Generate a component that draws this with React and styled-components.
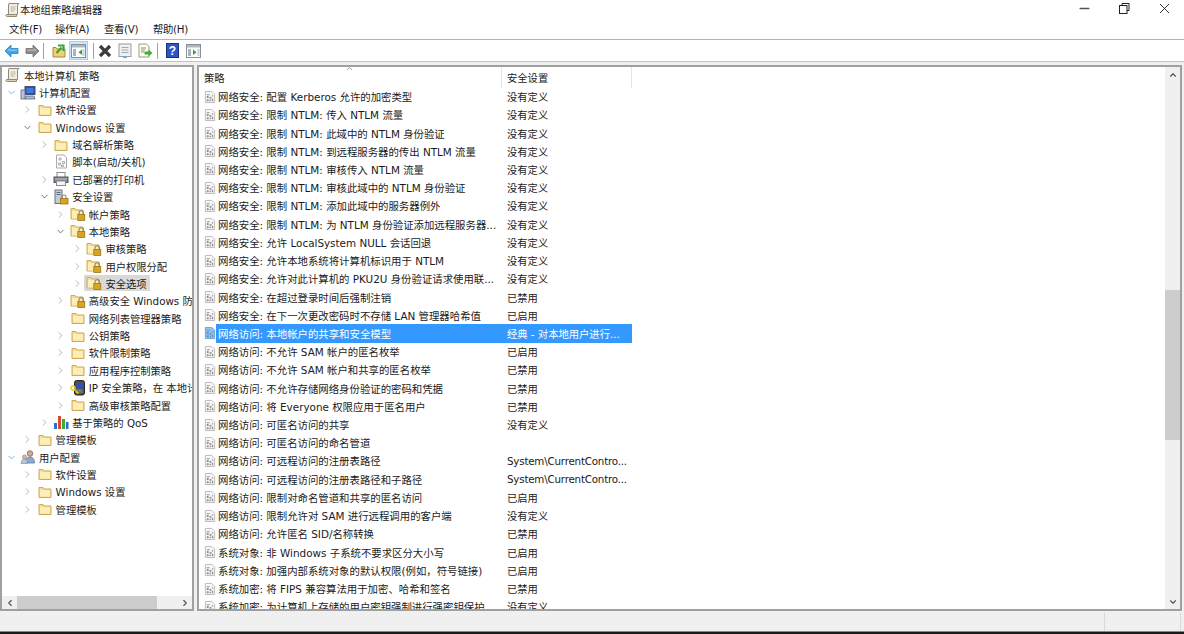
import React from 'react';
import styled, { createGlobalStyle } from 'styled-components';
import { ChevronRight, ChevronDown, ChevronUp, ChevronLeft, Minus, X } from 'lucide-react';

const GlobalStyle = createGlobalStyle`
  html, body { margin: 0; padding: 0; background: #fff; overflow: hidden; }
  body { font-family: "DejaVu Sans", "Noto Sans CJK SC", sans-serif; color: #1a1a1a; }
`;

const Window = styled.div`
  width: 1184px;
  height: 634px;
  display: flex;
  flex-direction: column;
  font-size: 10.3px;
  background: #f0f0f0;
`;

const TitleBar = styled.div`
  height: 19px;
  flex: none;
  display: flex;
  align-items: center;
  background: #fff;
  padding-left: 5px;
`;

const TitleText = styled.span`
  flex: 1;
  margin-left: -1px;
  margin-top: -1px;
`;

const WinButton = styled.div`
  width: 40px;
  display: flex;
  align-items: center;
  justify-content: center;
  margin-top: -2px;
`;

const MenuBar = styled.div`
  height: 21px;
  flex: none;
  display: flex;
  align-items: center;
  background: #fff;
  border-bottom: 1px solid #b4b4b4;
  padding: 0 0 1px 9px;
  gap: 14px;
  box-sizing: border-box;
`;

const MenuItem = styled.span`
  width: ${p => p.$w}px;
  white-space: nowrap;
  letter-spacing: -0.3px;
`;

const Toolbar = styled.div`
  height: 22px;
  flex: none;
  display: flex;
  align-items: center;
  background: #fff;
  border-bottom: 1px solid #c4c4c4;
  padding-left: 3px;
  box-sizing: border-box;
`;

const ToolIcon = styled.div`
  width: ${p => p.$w || 16}px;
  height: ${p => p.$h || 16}px;
  display: flex;
  align-items: center;
  justify-content: center;
  margin-right: ${p => p.$mr || 4}px;
  ${p => p.$active && 'background: #cce8ff; box-shadow: inset 0 0 0 1px #99d1ff;'}
`;

const ToolSep = styled.div`
  width: 1px;
  height: 16px;
  background: #a0a0a0;
  margin: 0 ${p => p.$r}px 0 ${p => p.$l}px;
`;

const Panes = styled.div`
  flex: 1;
  min-height: 0;
  display: flex;
  padding-top: 3px;
  gap: 3px;
`;

const LeftPane = styled.div`
  width: 190px;
  flex: none;
  border: 2px solid #a0a0a0;
  background: #fff;
  display: flex;
  flex-direction: column;
  overflow: hidden;
`;

const TreeArea = styled.div`
  flex: 1;
  min-height: 0;
  margin-top: -0.5px;
  overflow: hidden;
`;

const TreeRow = styled.div`
  height: 17.36px;
  display: flex;
  align-items: center;
  white-space: nowrap;
  padding-left: ${p => (p.$depth < 0 ? 3 : p.$depth * 16.6 + 1)}px;
`;

const Caret = styled.div`
  width: 17px;
  flex: none;
  display: flex;
  padding-left: 2.5px;
  box-sizing: border-box;
  color: #9a9a9a;
`;

const TreeItem = styled.div`
  display: flex;
  align-items: center;
  height: 16px;
  ${p => p.$sel && 'background: #d9d9d9; margin-left: -2px; padding: 0 3px 0 2px;'}
`;

const TreeIcon = styled.div`
  width: 16px;
  height: 16px;
  flex: none;
  display: flex;
  align-items: center;
  justify-content: center;
  margin-right: 3px;
`;

const HScroll = styled.div`
  height: 13px;
  flex: none;
  display: flex;
  align-items: center;
  background: #f0f0f0;
  color: #505050;
`;

const HThumb = styled.div`
  width: 140px;
  height: 100%;
  background: #cdcdcd;
  margin-right: auto;
`;

const ScrollBtn = styled.div`
  width: 15px;
  height: 100%;
  flex: none;
  display: flex;
  align-items: center;
  justify-content: center;
`;

const RightPane = styled.div`
  flex: 1;
  min-width: 0;
  margin-right: 2px;
  border: 2px solid #a0a0a0;
  background: #fff;
  display: flex;
  overflow: hidden;
`;

const ListArea = styled.div`
  flex: 1;
  min-width: 0;
  overflow: hidden;
`;

const HeaderRow = styled.div`
  height: 20.5px;
  display: flex;
  align-items: center;
`;

const HeaderCell = styled.div`
  width: ${p => p.$w}px;
  height: 100%;
  flex: none;
  display: flex;
  align-items: center;
  padding-left: ${p => p.$pl}px;
  box-sizing: border-box;
  border-right: 1px solid #e5e5e5;
  position: relative;
`;

const SortArrow = styled.div`
  position: absolute;
  left: 146px;
  top: -4px;
  color: #808080;
`;

const Row = styled.div`
  height: 18.23px;
  width: 433px;
  display: flex;
  align-items: center;
  white-space: nowrap;
`;

const RowIcon = styled.div`
  width: 12px;
  height: 14px;
  flex: none;
  margin-left: 5px;
  display: flex;
  align-items: center;
`;

const RowBody = styled.div`
  flex: 1;
  height: 100%;
  display: flex;
  align-items: center;
  ${p => p.$sel && 'background: #3399ff; color: #fff;'}
`;

const PolicyCell = styled.div`
  width: 291px;
  flex: none;
  padding-left: 2px;
  box-sizing: border-box;
  overflow: hidden;
  font-size: 10.4px;
`;

const ValueCell = styled.div`
  letter-spacing: ${p => (p.$latin ? '-0.2px' : '0')};
`;

const VScroll = styled.div`
  width: 15px;
  flex: none;
  display: flex;
  flex-direction: column;
  background: #f0f0f0;
  color: #505050;
`;

const VThumb = styled.div`
  height: 150px;
  margin-top: 208px;
  background: #cdcdcd;
  margin-bottom: auto;
`;

const VBtn = styled.div`
  height: 15px;
  flex: none;
  display: flex;
  align-items: center;
  justify-content: center;
`;

const StatusBar = styled.div`
  height: 20px;
  flex: none;
  display: flex;
  justify-content: flex-end;
`;

const StatusCell = styled.div`
  width: ${p => p.$w}px;
  flex: none;
  border-left: 1px solid #d9d9d9;
  margin-top: 2px;
`;

const BottomEdge = styled.div`
  height: 3px;
  flex: none;
  background: #1a1a1a;
  border-top: 1px solid #888;
  box-sizing: border-box;
`;

const Folder = () => (
  <svg width="14" height="14" viewBox="0 0 14 14">
    <path d="M1 2.5h4l1 1.5h7v8.5H1z" fill="#f8dc8f" stroke="#cda95a" strokeWidth="1" />
    <path d="M2 5h10v6.5H2z" fill="#fdeeb8" />
  </svg>
);

const LockFolder = () => (
  <svg width="16" height="16" viewBox="0 0 16 16">
    <path d="M1 2.5h4l1 1.5h7v9H1z" fill="#f8dc8f" stroke="#cda95a" strokeWidth="1" />
    <path d="M2 5h10v7.5H2z" fill="#fdeeb8" />
    <path d="M9 8.5V7a2.2 2.2 0 0 1 4.4 0v1.5" fill="none" stroke="#8a8a6a" strokeWidth="1.1" />
    <rect x="7.8" y="8.5" width="7" height="6" fill="#d9a520" stroke="#8f6c10" strokeWidth="0.7" />
  </svg>
);

const Scroll = () => (
  <svg width="16" height="16" viewBox="0 0 16 16">
    <path d="M4 1.5h10l-1.5 1.5v9.5H3.5V3z" fill="#f3efe0" stroke="#8d8a78" />
    <path d="M1.5 12.5h10v2h-9a1 1 0 0 1-1-2z" fill="#d9d2b5" stroke="#8d8a78" />
    <path d="M5.5 5h5M5.5 7h5M5.5 9h4" stroke="#a9a690" strokeWidth="0.8" />
  </svg>
);

const Computer = () => (
  <svg width="16" height="16" viewBox="0 0 16 16">
    <rect x="5" y="1.5" width="10" height="8" fill="#2a4fc0" stroke="#44506e" />
    <rect x="6.5" y="3" width="7" height="5" fill="#3f79e6" />
    <rect x="1" y="5" width="4" height="9" fill="#b8c2d2" stroke="#5c6a85" strokeWidth="0.8" />
    <path d="M6 11h8l1 3H5z" fill="#aeb9cc" stroke="#5c6a85" strokeWidth="0.8" />
  </svg>
);

const Users = () => (
  <svg width="16" height="16" viewBox="0 0 16 16">
    <circle cx="10" cy="4.5" r="2.8" fill="#d8a98c" stroke="#6a5a50" strokeWidth="0.7" />
    <path d="M5.5 14c0-4 2-6 4.5-6s4.5 2 4.5 6z" fill="#8fa9cf" stroke="#55688a" strokeWidth="0.7" />
    <circle cx="4.5" cy="8" r="2" fill="#d8b9a4" stroke="#7a7a7a" strokeWidth="0.6" />
    <path d="M1 14.5c0-2.8 1.4-4.5 3.5-4.5s3 1.4 3 4.5z" fill="#b5c5dc" stroke="#7a8aa0" strokeWidth="0.6" />
  </svg>
);

// grey page with the dotted pattern used by every policy row
const Doc = ({ sel }) => (
  <svg width="13" height="14" viewBox="0 0 13 14">
    <path d="M1.5 1h7l3 3v9h-10z" fill={sel ? '#8fc0ee' : '#f7f7f7'} stroke={sel ? '#6f9fce' : '#b9b9b9'} />
    <path d="M3 4h3v1H3zM3 6h2v2H3zM6 7h2v2H6zM8.5 5h1.5v1.5H8.5zM3 9.5h2v2H3zM6 10h1.5v1.5H6zM8.5 9h1.5v2.5H8.5z" fill={sel ? '#5f92c4' : '#8f8f8f'} />
  </svg>
);

const ScriptDoc = () => (
  <svg width="15" height="15" viewBox="0 0 15 15">
    <path d="M2.5 1h7.5l2.5 2.5V14h-10z" fill="#fff" stroke="#a9a9a9" />
    <path d="M5 4h2v2H5zM8.5 7.5h2v2h-2zM4.5 9h2v2h-2zM7.5 11h2v1.5h-2z" fill="none" stroke="#9a9a9a" strokeWidth="0.8" />
  </svg>
);

const Printer = () => (
  <svg width="16" height="16" viewBox="0 0 16 16">
    <rect x="4" y="1.5" width="8" height="5" fill="#fff" stroke="#8b8b8b" />
    <rect x="1" y="6" width="14" height="5.5" fill="#7e8288" stroke="#54575c" />
    <rect x="3.5" y="10" width="9" height="4.5" fill="#f4f4f4" stroke="#8b8b8b" />
    <path d="M2 8h12" stroke="#c5c8cc" />
  </svg>
);

const ServerLock = () => (
  <svg width="16" height="16" viewBox="0 0 16 16">
    <rect x="2" y="1" width="7" height="13.5" fill="#c5cbd2" stroke="#6c7480" />
    <path d="M3.5 3.5h4M3.5 5.5h4" stroke="#5c6d85" />
    <path d="M9 9.5V8a2 2 0 0 1 4 0v1.5" fill="none" stroke="#8a8a6a" strokeWidth="1.1" />
    <rect x="7.5" y="9.5" width="7.5" height="5.5" fill="#d9a520" stroke="#8f6c10" strokeWidth="0.7" />
  </svg>
);

const KeyServer = () => (
  <svg width="16" height="16" viewBox="0 0 16 16">
    <rect x="4.5" y="0.5" width="10" height="14.5" rx="2" fill="#4d4d55" stroke="#26262c" />
    <rect x="6.5" y="3" width="6" height="5" fill="#2a50c8" />
    <path d="M6.5 10h6M6.5 12h6" stroke="#9a9aa0" />
    <circle cx="3" cy="8" r="2" fill="none" stroke="#e8d020" strokeWidth="1.4" />
    <path d="M4.5 9.5l4 4M7 12l-1 1" stroke="#e8d020" strokeWidth="1.4" />
  </svg>
);

const Bars = () => (
  <svg width="16" height="16" viewBox="0 0 16 16">
    <rect x="1" y="9" width="3" height="6" fill="#2a6fd0" />
    <rect x="5" y="2" width="3" height="13" fill="#d84a30" />
    <rect x="9" y="5" width="3" height="10" fill="#46a83c" />
    <rect x="13" y="8" width="2.5" height="7" fill="#2a6fd0" />
  </svg>
);

const Arrow = ({ fill, edge, flip }) => (
  <svg width="15" height="14" viewBox="0 0 15 14" style={flip ? { transform: 'scaleX(-1)' } : undefined}>
    <path d="M1 7l6-6v3.5h7v5H7V13z" fill={fill} stroke={edge} strokeWidth="0.8" strokeLinejoin="round" />
    <path d="M3 7l3.5-3.5v2h6.5V7z" fill="#fff" opacity="0.3" />
  </svg>
);

const UpFolder = () => (
  <svg width="14" height="15" viewBox="0 0 14 15">
    <path d="M1 4.5h3l1 1.5h8v8H1z" fill="#f2cf74" stroke="#a98a3a" />
    <path d="M4.5 10l5-5.500M6 2.5h5.500V8" fill="none" stroke="#36a83a" strokeWidth="2.2" />
  </svg>
);

const PaneIcon = ({ left }) => (
  <svg width="15" height="14" viewBox="0 0 15 14">
    <rect x="0.5" y="0.5" width="14" height="13" fill="#fff" stroke="#8a8f96" />
    <rect x="1" y="1" width="13" height="2.5" fill="#aeb8c2" />
    <rect x="2" y="5" width="3" height="7" fill="#a9b4be" />
    <path d={left ? 'M11 5.5v5.5L7.5 8.2z' : 'M7 5.5v5.5L10.5 8.2z'} fill="#2fa032" />
    <rect x="11.5" y="5" width="2" height="7" fill="#c6ced6" />
  </svg>
);

const BlackX = () => (
  <svg width="14" height="14" viewBox="0 0 14 14">
    <path d="M2 2l10 10M12 2L2 12" stroke="#3c3c3c" strokeWidth="3.2" />
  </svg>
);

const SheetIcon = () => (
  <svg width="14" height="15" viewBox="0 0 14 15">
    <rect x="1" y="1" width="12" height="12.5" fill="#f1f1f1" stroke="#9c9c9c" />
    <path d="M3.5 4.5h7M3.5 7h7M3.5 9.500h7" stroke="#a9a9a9" />
    <path d="M5 14.2h4" stroke="#4ab4ee" strokeWidth="1.5" />
  </svg>
);

const ExportIcon = () => (
  <svg width="15" height="15" viewBox="0 0 15 15">
    <path d="M1 1h7.5l2.5 2.5V14H1z" fill="#fffdf0" stroke="#a09a78" />
    <path d="M3 5h5M3 7h4M3 9h3" stroke="#8f8f7a" />
    <path d="M6.5 8.5h4V6.5L14.5 10l-4 3.500v-2h-4z" fill="#3fae3c" />
  </svg>
);

const HelpIcon = () => (
  <svg width="13" height="15" viewBox="0 0 13 15">
    <rect x="0.5" y="0.5" width="12" height="14" fill="#2d55c8" stroke="#1b3178" />
    <text x="6.5" y="12" textAnchor="middle" fontSize="12" fontWeight="700" fill="#fff" fontFamily="Liberation Sans, sans-serif">?</text>
  </svg>
);

const RestoreIcon = () => (
  <svg width="11" height="11" viewBox="0 0 11 11">
    <path d="M3 2.5V.5h7v7H8" fill="none" stroke="#222" />
    <rect x="0.5" y="2.5" width="7.5" height="8" fill="none" stroke="#222" />
  </svg>
);

const icons = {
  folder: <Folder />,
  lock: <LockFolder />,
  scroll: <Scroll />,
  computer: <Computer />,
  users: <Users />,
  script: <ScriptDoc />,
  printer: <Printer />,
  server: <ServerLock />,
  key: <KeyServer />,
  bars: <Bars />,
};

// depth, caret (r / d / none), icon, label
const tree = [
  [-1, null, 'scroll', '本地计算机 策略'],
  [0, 'd', 'computer', '计算机配置'],
  [1, 'r', 'folder', '软件设置'],
  [1, 'd', 'folder', 'Windows 设置'],
  [2, 'r', 'folder', '域名解析策略'],
  [2, null, 'script', '脚本(启动/关机)'],
  [2, 'r', 'printer', '已部署的打印机'],
  [2, 'd', 'server', '安全设置'],
  [3, 'r', 'lock', '帐户策略'],
  [3, 'd', 'lock', '本地策略'],
  [4, 'r', 'lock', '审核策略'],
  [4, 'r', 'lock', '用户权限分配'],
  [4, 'r', 'lock', '安全选项', true],
  [3, 'r', 'lock', '高级安全 Windows 防火墙'],
  [3, null, 'folder', '网络列表管理器策略'],
  [3, 'r', 'folder', '公钥策略'],
  [3, 'r', 'folder', '软件限制策略'],
  [3, 'r', 'folder', '应用程序控制策略'],
  [3, 'r', 'key', 'IP 安全策略，在 本地计算机'],
  [3, 'r', 'folder', '高级审核策略配置'],
  [2, 'r', 'bars', '基于策略的 QoS'],
  [1, 'r', 'folder', '管理模板'],
  [0, 'd', 'users', '用户配置'],
  [1, 'r', 'folder', '软件设置'],
  [1, 'r', 'folder', 'Windows 设置'],
  [1, 'r', 'folder', '管理模板'],
];

const policies = [
  ['网络安全: 配置 Kerberos 允许的加密类型', '没有定义'],
  ['网络安全: 限制 NTLM: 传入 NTLM 流量', '没有定义'],
  ['网络安全: 限制 NTLM: 此域中的 NTLM 身份验证', '没有定义'],
  ['网络安全: 限制 NTLM: 到远程服务器的传出 NTLM 流量', '没有定义'],
  ['网络安全: 限制 NTLM: 审核传入 NTLM 流量', '没有定义'],
  ['网络安全: 限制 NTLM: 审核此域中的 NTLM 身份验证', '没有定义'],
  ['网络安全: 限制 NTLM: 添加此域中的服务器例外', '没有定义'],
  ['网络安全: 限制 NTLM: 为 NTLM 身份验证添加远程服务器...', '没有定义'],
  ['网络安全: 允许 LocalSystem NULL 会话回退', '没有定义'],
  ['网络安全: 允许本地系统将计算机标识用于 NTLM', '没有定义'],
  ['网络安全: 允许对此计算机的 PKU2U 身份验证请求使用联...', '没有定义'],
  ['网络安全: 在超过登录时间后强制注销', '已禁用'],
  ['网络安全: 在下一次更改密码时不存储 LAN 管理器哈希值', '已启用'],
  ['网络访问: 本地帐户的共享和安全模型', '经典 - 对本地用户进行...', true],
  ['网络访问: 不允许 SAM 帐户的匿名枚举', '已启用'],
  ['网络访问: 不允许 SAM 帐户和共享的匿名枚举', '已禁用'],
  ['网络访问: 不允许存储网络身份验证的密码和凭据', '已禁用'],
  ['网络访问: 将 Everyone 权限应用于匿名用户', '已禁用'],
  ['网络访问: 可匿名访问的共享', '没有定义'],
  ['网络访问: 可匿名访问的命名管道', ''],
  ['网络访问: 可远程访问的注册表路径', 'System\\CurrentContro...'],
  ['网络访问: 可远程访问的注册表路径和子路径', 'System\\CurrentContro...'],
  ['网络访问: 限制对命名管道和共享的匿名访问', '已启用'],
  ['网络访问: 限制允许对 SAM 进行远程调用的客户端', '没有定义'],
  ['网络访问: 允许匿名 SID/名称转换', '已禁用'],
  ['系统对象: 非 Windows 子系统不要求区分大小写', '已启用'],
  ['系统对象: 加强内部系统对象的默认权限(例如，符号链接)', '已启用'],
  ['系统加密: 将 FIPS 兼容算法用于加密、哈希和签名', '已禁用'],
  ['系统加密: 为计算机上存储的用户密钥强制进行强密钥保护', '没有定义'],
];

const App = () => (
  <Window>
    <GlobalStyle />
    <TitleBar>
      <Scroll />
      <TitleText>本地组策略编辑器</TitleText>
      <WinButton><Minus size={15} strokeWidth={2.2} color="#555" /></WinButton>
      <WinButton><RestoreIcon /></WinButton>
      <WinButton><X size={17} strokeWidth={1.3} color="#222" /></WinButton>
    </TitleBar>
    <MenuBar>
      <MenuItem $w={32}>文件(F)</MenuItem>
      <MenuItem $w={35}>操作(A)</MenuItem>
      <MenuItem $w={35}>查看(V)</MenuItem>
      <MenuItem $w={35}>帮助(H)</MenuItem>
    </MenuBar>
    <Toolbar>
      <ToolIcon $mr={5}><Arrow fill="#3aa8ee" edge="#2a80c0" /></ToolIcon>
      <ToolIcon $mr={2}><Arrow fill="#8c8c8c" edge="#707070" flip /></ToolIcon>
      <ToolSep $l={1} $r={7} />
      <ToolIcon $mr={2}><UpFolder /></ToolIcon>
      <ToolIcon $w={19} $h={19} $mr={5} $active><PaneIcon left /></ToolIcon>
      <ToolSep $l={0} $r={3} />
      <ToolIcon $mr={4}><BlackX /></ToolIcon>
      <ToolIcon $mr={4}><SheetIcon /></ToolIcon>
      <ToolIcon $mr={3}><ExportIcon /></ToolIcon>
      <ToolSep $l={1} $r={6} />
      <ToolIcon $mr={5}><HelpIcon /></ToolIcon>
      <ToolIcon><PaneIcon /></ToolIcon>
    </Toolbar>
    <Panes>
      <LeftPane>
        <TreeArea>
          {tree.map(([depth, caret, icon, label, sel], i) => (
            <TreeRow key={i} $depth={depth}>
              {depth >= 0 && (
                <Caret>
                  {caret === 'd' && <ChevronDown size={11} strokeWidth={1.6} color={depth === 0 ? '#3aa0e8' : '#404040'} />}
                  {caret === 'r' && <ChevronRight size={11} strokeWidth={1.6} />}
                </Caret>
              )}
              <TreeItem $sel={sel}>
                <TreeIcon>{icons[icon]}</TreeIcon>
                <span>{label}</span>
              </TreeItem>
            </TreeRow>
          ))}
        </TreeArea>
        <HScroll>
          <ScrollBtn><ChevronLeft size={10} strokeWidth={2.6} /></ScrollBtn>
          <HThumb />
          <ScrollBtn><ChevronRight size={10} strokeWidth={2.6} /></ScrollBtn>
        </HScroll>
      </LeftPane>
      <RightPane>
        <ListArea>
          <HeaderRow>
            <HeaderCell $w={303} $pl={5}>
              策略
              <SortArrow><ChevronUp size={9} strokeWidth={2} /></SortArrow>
            </HeaderCell>
            <HeaderCell $w={130} $pl={5}>安全设置</HeaderCell>
          </HeaderRow>
          {policies.map(([name, value, sel], i) => (
            <Row key={i}>
              <RowIcon><Doc sel={sel} /></RowIcon>
              <RowBody $sel={sel}>
                <PolicyCell>{name}</PolicyCell>
                <ValueCell $latin={value.startsWith('System')}>{value}</ValueCell>
              </RowBody>
            </Row>
          ))}
        </ListArea>
        <VScroll>
          <VBtn><ChevronUp size={10} strokeWidth={2.6} /></VBtn>
          <VThumb />
          <VBtn><ChevronDown size={10} strokeWidth={2.6} /></VBtn>
        </VScroll>
      </RightPane>
    </Panes>
    <StatusBar>
      <StatusCell $w={75} />
      <StatusCell $w={3} />
    </StatusBar>
    <BottomEdge />
  </Window>
);

export default App;
